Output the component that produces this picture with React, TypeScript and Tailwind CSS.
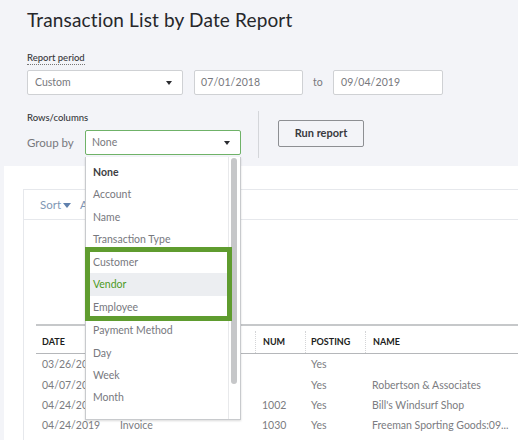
const rows = [
  { date: '03/26/2019', type: 'Invoice', num: '', posting: 'Yes', name: '' },
  { date: '04/07/2019', type: 'Invoice', num: '', posting: 'Yes', name: 'Robertson & Associates' },
  { date: '04/24/2019', type: 'Invoice', num: '1002', posting: 'Yes', name: "Bill's Windsurf Shop" },
  { date: '04/24/2019', type: 'Invoice', num: '1030', posting: 'Yes', name: 'Freeman Sporting Goods:09...' },
];

const Caret = () => (
  <svg width="6" height="4" viewBox="0 0 6 4" className="shrink-0">
    <path d="M0 0h6L3 4z" fill="#2b2c30" />
  </svg>
);

const itemClass = 'flex items-center pl-[7px] text-[10.5px] text-[#77787e]';

const GroupByMenu = () => (
  <div className="absolute left-[85px] top-[157px] z-10 flex h-[263px] w-[156px] flex-col border border-t-0 border-[#c8cacd] bg-white shadow-[0_1px_2px_rgba(0,0,0,0.15)]">
    <div className="w-[146px]">
      <div className="flex h-[27px] items-center pl-[7px] pt-[4px] text-[10.5px] font-bold text-[#3d3e42]">None</div>
      <div className={`${itemClass} h-[22px]`}>Account</div>
      <div className={`${itemClass} h-[23px]`}>Name</div>
      <div className={`${itemClass} h-[22px]`}>Transaction Type</div>
      <div className="relative z-10 -ml-px -mt-[4px] w-[147px] border-[5px] border-[#5f9c2f]">
        <div className="flex h-[21px] items-center pl-[3px] text-[10.5px] text-[#77787e]">Customer</div>
        <div className="flex h-[23px] items-center bg-[#eceef1] pl-[3px] text-[10.5px] text-[#4c9a24]">Vendor</div>
        <div className="flex h-[20px] items-center pl-[3px] pt-[3px] text-[10.5px] text-[#77787e]">Employee</div>
      </div>
      <div className={`${itemClass} h-[20px]`}>Payment Method</div>
      <div className={`${itemClass} h-[23px] pt-[2px]`}>Day</div>
      <div className={`${itemClass} h-[23px]`}>Week</div>
      <div className={`${itemClass} h-[22px]`}>Month</div>
    </div>
    <div className="absolute bottom-0 right-0 top-0 w-[12px] border-l border-[#e8e9eb] bg-white">
      <div className="ml-[2px] mt-[1px] h-[226px] w-[6px] rounded-full bg-[#c6c7c9]" />
    </div>
  </div>
);

export default function App() {
  return (
    <div className="relative flex h-[446px] w-[518px] flex-col overflow-hidden bg-white font-['Lato',sans-serif]">
      <div className="h-[166px] shrink-0 bg-[#f3f4f8] pl-[27px]">
        <h1 className="pt-[6px] text-[19px] font-normal leading-[28px] tracking-[0.15px] text-[#26272b]">Transaction List by Date Report</h1>

        <div className="mt-[17px] flex">
          <span className="border-b border-dotted border-[#777] text-[9.5px] font-medium leading-[13px] text-[#36373b]">Report period</span>
        </div>
        <div className="mt-[5px] flex items-center">
          <div className="flex h-[25px] w-[156px] items-center justify-between rounded-[2px] border border-[#cfd1d4] bg-white pl-[7px] pr-[10px] pt-px text-[10.5px] text-[#77787d]">
            Custom
            <Caret />
          </div>
          <div className="ml-[11px] flex h-[25px] w-[109px] items-center rounded-[2px] border border-[#cfd1d4] bg-white pl-[6px] pt-px text-[10.5px] tracking-[0.1px] text-[#77787d]">07/01/2018</div>
          <span className="ml-[10px] w-[20px] text-[10.5px] text-[#77787d]">to</span>
          <div className="flex h-[25px] w-[110px] items-center rounded-[2px] border border-[#cfd1d4] bg-white pl-[7px] pt-px text-[10.5px] tracking-[0.1px] text-[#77787d]">09/04/2019</div>
        </div>

        <div className="mt-[16px] flex">
          <div className="w-[231px]">
            <div className="text-[9.5px] font-medium leading-[13px] text-[#36373b]">Rows/columns</div>
            <div className="mt-[6px] flex items-center">
              <span className="w-[58px] pt-[1px] text-[11.5px] text-[#77787d]">Group by</span>
              <div className="flex h-[25px] w-[156px] items-center justify-between rounded-[2px] border border-[#6fb268] bg-white pl-[6px] pr-[10px] pt-px text-[10.5px] text-[#77787d]">
                None
                <Caret />
              </div>
            </div>
          </div>
          <div className="h-[47px] w-px bg-[#d4d6da]" />
          <button className="ml-[19px] mt-[9px] h-[27px] w-[86px] rounded-[2px] border border-[#8d8f93] text-[11px] font-bold text-[#393a3e]">Run report</button>
        </div>
      </div>

      <div className="h-[274px] shrink-0 bg-[#f3f4f8] pl-[4px]">
        <div className="h-full bg-white pl-[19px] pt-[23px]">
          <div className="h-full border-l border-t border-[#e6e8ec]">
            <div className="flex h-[30px] items-center gap-[2px] border-b border-[#e6e8ec] pl-[16px] text-[11.5px] text-[#7f97b5]">
              Sort
              <svg width="8" height="5" viewBox="0 0 8 5" className="mt-[1px]">
                <path d="M0 0h8L4 5z" fill="#5f80ad" />
              </svg>
              <span className="ml-[7px]">Add notes</span>
            </div>

            <div className="ml-[12px] mt-[104px]">
              <div className="flex h-[30px] items-center border-b border-t-2 border-b-[#b5b7ba] border-t-[#c6c8ca] pt-[4px] text-[9px] font-bold text-[#1c1d20]">
                <div className="w-[219px] pl-[6px]">DATE</div>
                <div className="h-[22px] w-[50px] border-l border-dotted border-[#d4d5d7] pl-[7px] leading-[22px]">NUM</div>
                <div className="h-[22px] w-[60px] border-l border-dotted border-[#d4d5d7] pl-[5px] leading-[22px]">POSTING</div>
                <div className="h-[22px] flex-1 border-l border-dotted border-[#d4d5d7] pl-[7px] leading-[22px]">NAME</div>
              </div>
              <div className="pt-[1px]">
                {rows.map((row, i) => (
                  <div key={i} className="flex h-[20.3px] items-center whitespace-nowrap text-[10.5px] text-[#7b7c81]">
                    <div className="w-[84px] shrink-0 pl-[6px]">{row.date}</div>
                    <div className="w-[135px] shrink-0">{row.type}</div>
                    <div className="w-[50px] shrink-0 pl-[7px]">{row.num}</div>
                    <div className="w-[60px] shrink-0 pl-[6px]">{row.posting}</div>
                    <div className="pl-[7px]">{row.name}</div>
                  </div>
                ))}
              </div>
            </div>
          </div>
        </div>
      </div>

      <GroupByMenu />
    </div>
  );
}
